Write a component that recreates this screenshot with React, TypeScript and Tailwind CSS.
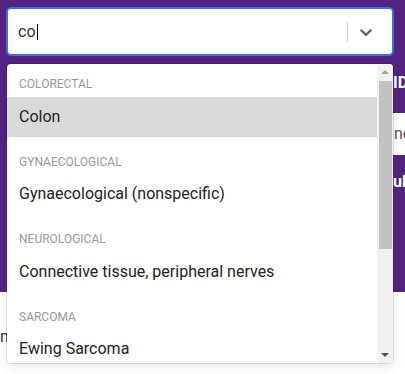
import React from "react";

const groups = [
  { label: "Colorectal", options: ["Colon"] },
  { label: "Gynaecological", options: ["Gynaecological (nonspecific)"] },
  { label: "Neurological", options: ["Connective tissue, peripheral nerves"] },
  { label: "Sarcoma", options: ["Ewing Sarcoma", "Osteosarcoma"] },
];

function Chevron() {
  return (
    <svg width="20" height="20" viewBox="0 0 20 20" className="fill-[#666]">
      <path d="M4.516 7.548c0.436-0.446 1.043-0.481 1.576 0l3.908 3.747 3.908-3.747c0.533-0.481 1.141-0.446 1.574 0 0.436 0.445 0.408 1.197 0 1.615-0.406 0.418-4.695 4.502-4.695 4.502-0.217 0.223-0.502 0.335-0.787 0.335s-0.57-0.112-0.789-0.335c0 0-4.287-4.084-4.695-4.502s-0.436-1.17 0-1.615z" />
    </svg>
  );
}

function SelectControl() {
  return (
    <div className="flex h-[49px] w-[388px] items-center rounded-[5px] border-2 border-[#3b6fe4] bg-white">
      <div className="flex flex-1 items-center pl-[10px] text-[16px] text-[#333]">
        <span>co</span>
        <span className="ml-[1px] h-[16px] w-[1px] bg-black" />
      </div>
      <span className="h-[20px] w-[1px] bg-[#ccc]" />
      <div className="flex w-[44px] items-center pl-[8px]">
        <Chevron />
      </div>
    </div>
  );
}

function Scrollbar() {
  return (
    <div className="flex w-[16px] flex-col items-center bg-[#f1f1f1]">
      <div className="flex h-[16px] items-center justify-center">
        <span className="h-0 w-0 border-x-[4px] border-b-[4px] border-x-transparent border-b-[#a3a3a3]" />
      </div>
      <div className="mt-[1px] h-[168px] w-[13px] bg-[#c1c1c1]" />
      <div className="flex-1" />
      <div className="flex h-[16px] items-center justify-center">
        <span className="h-0 w-0 border-x-[4px] border-t-[4px] border-x-transparent border-t-[#505050]" />
      </div>
    </div>
  );
}

export default function App() {
  return (
    <div className="relative h-[374px] w-[405px] overflow-hidden bg-white font-['Roboto',sans-serif]">
      {/* page behind the open select */}
      <div className="h-[292px] bg-[#52247f] px-[6px] pt-[7px]">
        <SelectControl />
        <div className="ml-[387px] mt-[20px] whitespace-nowrap text-[16px] font-bold leading-[14px] text-white">
          ID
        </div>
        <div className="ml-[381px] mt-[23px] flex h-[42px] w-[40px] items-center rounded-[4px] bg-white pl-[7px] text-[16px] text-[#555]">
          nc
        </div>
        <div className="ml-[360px] mt-[20px] whitespace-nowrap text-[16px] font-bold leading-[14px] text-white">
          Result
        </div>
      </div>
      <div className="pt-[36px] text-[16px] leading-[18px] text-[#333]">mm</div>

      {/* open menu */}
      <div className="absolute left-[7px] top-[64px] flex h-[299px] w-[386px] overflow-hidden rounded-[4px] bg-white shadow-[0_0_0_1px_rgba(0,0,0,0.1),0_4px_11px_rgba(0,0,0,0.1)]">
        <div className="flex-1 overflow-hidden pt-[3px]">
          {groups.map((g, gi) => (
            <div key={g.label} className="py-2">
              <div className="mb-[3.5px] px-3 text-[12px] uppercase leading-[18px] text-[#999]">
                {g.label}
              </div>
              {g.options.map((o) => (
                <div
                  key={o}
                  className={
                    gi === 0
                      ? "bg-[#d9d9d9] px-3 py-2 text-[16px] leading-[24px] text-[#222]"
                      : "px-3 py-2 text-[16px] leading-[24px] text-[#222]"
                  }
                >
                  {o}
                </div>
              ))}
            </div>
          ))}
        </div>
        <Scrollbar />
      </div>
    </div>
  );
}
